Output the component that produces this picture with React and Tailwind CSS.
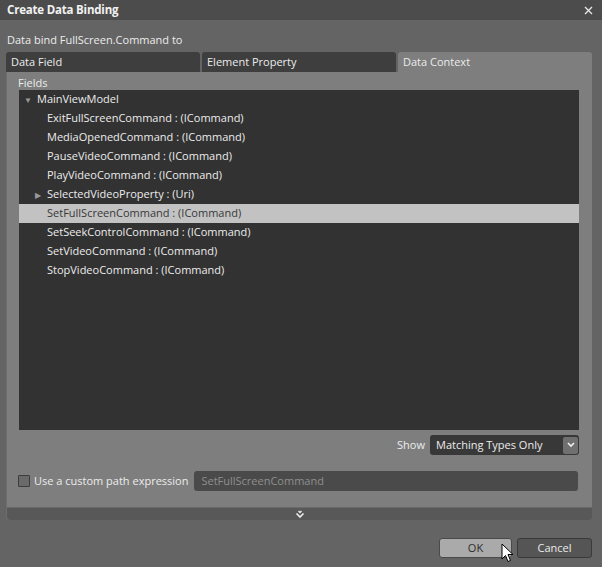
import React from "react";

const rows = [
  { text: "ExitFullScreenCommand : (ICommand)" },
  { text: "MediaOpenedCommand : (ICommand)" },
  { text: "PauseVideoCommand : (ICommand)" },
  { text: "PlayVideoCommand : (ICommand)" },
  { text: "SelectedVideoProperty : (Uri)", expandable: true },
  { text: "SetFullScreenCommand : (ICommand)", selected: true },
  { text: "SetSeekControlCommand : (ICommand)" },
  { text: "SetVideoCommand : (ICommand)" },
  { text: "StopVideoCommand : (ICommand)" },
];

const font = { fontFamily: '"Open Sans", "Noto Sans", sans-serif' };

function Cursor() {
  return (
    <svg className="absolute left-[501px] top-[543px]" width="13" height="21" viewBox="0 0 13 21">
      <path d="M1 1 L1 16 L4.5 12.5 L7 18.5 L9.5 17.5 L7 11.5 L12 11.5 Z" fill="#fff" stroke="#000" strokeWidth="1" strokeLinejoin="round" />
    </svg>
  );
}

export default function App() {
  return (
    <div className="relative w-[602px] h-[567px] bg-[#646464] flex flex-col text-[11px] text-[#ececec] overflow-hidden" style={font}>
      {/* title bar */}
      <div className="h-[20px] bg-[#4c4c4c] flex items-center justify-between pl-[7px] pr-[9px]">
        <span className="font-bold text-[11.5px] tracking-[-0.2px] text-[#f2f2f2] leading-none">Create Data Binding</span>
        <svg width="9" height="9" viewBox="0 0 9 9">
          <path d="M1 1 L8 8 M8 1 L1 8" stroke="#e6e6e6" strokeWidth="1.4" />
        </svg>
      </div>

      <div className="flex flex-col pl-[6px] pr-[10px]">
        <div className="h-[16px] mt-[12px] pl-[1px] flex items-center">Data bind FullScreen.Command to</div>

        {/* tabs */}
        <div className="mt-[4px] h-[20px] flex gap-[2px]">
          <div className="flex-1 bg-[#3e3e3e] rounded-t-[3px] pl-[5px] pt-[1px] flex items-center">Data Field</div>
          <div className="flex-1 bg-[#3e3e3e] rounded-t-[3px] pl-[5px] pt-[1px] flex items-center">Element Property</div>
          <div className="flex-1 bg-[#7e7e7e] rounded-t-[3px] pl-[5px] pt-[1px] flex items-center">Data Context</div>
        </div>

        {/* panel */}
        <div className="bg-[#7e7e7e] rounded-b-[3px] flex flex-col border-l border-[#6e6e6e]">
          <div className="h-[14px] mt-[4px] pl-[11px] flex items-center">Fields</div>
          <div className="mx-[12px] mr-[13px] h-[340px] bg-[#323232] flex flex-col">
            <div className="h-[19px] flex items-center pl-[5px]">
              <span className="text-[8px] text-[#9a9a9a] w-[13px]">▼</span>
              <span>MainViewModel</span>
            </div>
            {rows.map((r) => (
              <div
                key={r.text}
                className={
                  "h-[19px] flex items-center pl-[16px] " +
                  (r.selected ? "bg-[#c2c2c2] text-[#383838]" : "")
                }
              >
                <span className="text-[8px] text-[#9a9a9a] w-[12px]">{r.expandable ? "▶" : ""}</span>
                <span>{r.text}</span>
              </div>
            ))}
          </div>

          {/* show row */}
          <div className="mt-[5px] h-[20px] flex items-center justify-end gap-[5px] mr-[13px]">
            <span>Show</span>
            <div className="w-[149px] h-[20px] bg-[#383838] rounded-[3px] flex items-center justify-between pl-[6px] pr-[1px]">
              <span>Matching Types Only</span>
              <div className="w-[15px] h-[17px] bg-[#707070] rounded-[2px] flex items-center justify-center">
                <svg width="8" height="6" viewBox="0 0 8 6">
                  <path d="M1 1 L4 4 L7 1" stroke="#f0f0f0" strokeWidth="1.6" fill="none" />
                </svg>
              </div>
            </div>
          </div>

          {/* custom path row */}
          <div className="mt-[16px] h-[20px] flex items-center pl-[11px] mr-[14px]">
            <div className="w-[12px] h-[12px] border border-[#3c3c3c] bg-[#6a6a6a] rounded-[1px]" />
            <span className="ml-[4px]">Use a custom path expression</span>
            <div className="ml-[6px] flex-1 h-[20px] bg-[#4a4a4a] rounded-[3px] flex items-center pl-[7px] text-[#8e8e8e]">
              SetFullScreenCommand
            </div>
          </div>

          {/* expander strip */}
          <div className="mt-[16px] h-[13px] bg-[#585858] rounded-b-[3px] flex items-center justify-center border-t border-[#6a6a6a]">
            <svg width="10" height="8" viewBox="0 0 10 8">
              <path d="M3.5 1 L5 2.5 L6.5 1" stroke="#f0f0f0" strokeWidth="1.3" fill="none" />
              <path d="M1.5 3.5 L5 7 L8.5 3.5" stroke="#f0f0f0" strokeWidth="1.6" fill="none" />
            </svg>
          </div>
        </div>

        {/* buttons */}
        <div className="mt-[18px] flex justify-end gap-[5px]">
          <div className="w-[73px] h-[20px] bg-[#aaaaaa] border border-[#4a4a4a] rounded-[3px] flex items-center justify-center text-[#2c2c2c]">
            OK
          </div>
          <div className="w-[75px] h-[20px] bg-[#555555] border border-[#3a3a3a] rounded-[3px] flex items-center justify-center">
            Cancel
          </div>
        </div>
      </div>

      <Cursor />
    </div>
  );
}
